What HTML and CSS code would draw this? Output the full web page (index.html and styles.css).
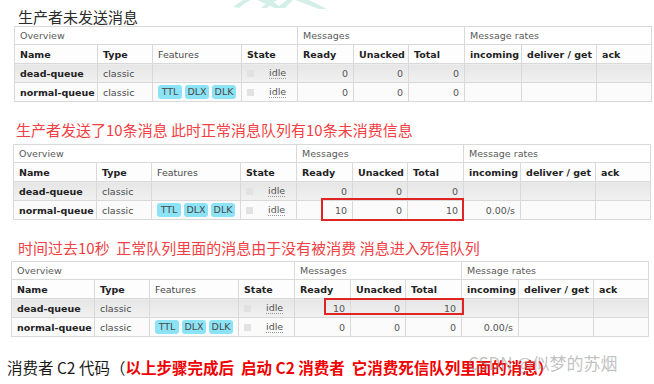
FILE: index.html
```html
<!DOCTYPE html>
<html lang="zh">
<head>
<meta charset="utf-8">
<title>死信队列</title>
<link rel="stylesheet" href="styles.css">
</head>
<body>
<div class="page">
  <svg class="mark" width="120" height="12" viewBox="0 0 120 12">
    <path d="M10 7 Q18 0 26 -2 L32 -2 Q22 2 16 8 Z" fill="#d3efe8"/>
    <path d="M34 0 L48 0 L56 6 L64 0 L70 0 L62 8 L52 8 Z" fill="#d3efe8"/>
    <path d="M48 0 Q42 4 38 8 L44 8 Q48 4 54 0 Z" fill="#d3efe8"/>
    <path d="M72 0 L86 0 L104 9 L96 9 Z" fill="#d3efe8"/>
  </svg>

  <h2 class="title t1">生产者未发送消息</h2>
  <table class="mq mq1">
    <colgroup>
      <col class="c-name"><col class="c-type"><col class="c-feat"><col class="c-state">
      <col class="c-ready"><col class="c-unack"><col class="c-total">
      <col class="c-in"><col class="c-del"><col class="c-ack">
    </colgroup>
    <tr class="group"><td colspan="4">Overview</td><td colspan="3">Messages</td><td colspan="3">Message rates</td></tr>
    <tr class="head"><th>Name</th><th>Type</th><th class="light">Features</th><th>State</th><th>Ready</th><th>Unacked</th><th>Total</th><th>incoming</th><th>deliver / get</th><th>ack</th></tr>
    <tr class="alt"><td class="qn">dead-queue</td><td>classic</td><td></td><td><span class="st"><i class="box"></i><span class="idle">idle</span></span></td><td class="num">0</td><td class="num">0</td><td class="num">0</td><td></td><td></td><td></td></tr>
    <tr class="row"><td class="qn">normal-queue</td><td>classic</td><td><span class="tags"><span class="tag">TTL</span><span class="tag">DLX</span><span class="tag">DLK</span></span></td><td><span class="st"><i class="box"></i><span class="idle">idle</span></span></td><td class="num">0</td><td class="num">0</td><td class="num">0</td><td></td><td></td><td></td></tr>
  </table>

  <h2 class="title red t2">生产者发送了10条消息 此时正常消息队列有10条未消费信息</h2>
  <div class="wrap w2">
    <table class="mq mq2">
      <colgroup>
        <col class="c-name"><col class="c-type"><col class="c-feat"><col class="c-state">
        <col class="c-ready"><col class="c-unack"><col class="c-total">
        <col class="c-in"><col class="c-del"><col class="c-ack">
      </colgroup>
      <tr class="group"><td colspan="4">Overview</td><td colspan="3">Messages</td><td colspan="3">Message rates</td></tr>
      <tr class="head"><th>Name</th><th>Type</th><th class="light">Features</th><th>State</th><th>Ready</th><th>Unacked</th><th>Total</th><th>incoming</th><th>deliver / get</th><th>ack</th></tr>
      <tr class="alt"><td class="qn">dead-queue</td><td>classic</td><td></td><td><span class="st"><i class="box"></i><span class="idle">idle</span></span></td><td class="num">0</td><td class="num">0</td><td class="num">0</td><td></td><td></td><td></td></tr>
      <tr class="row"><td class="qn">normal-queue</td><td>classic</td><td><span class="tags"><span class="tag">TTL</span><span class="tag">DLX</span><span class="tag">DLK</span></span></td><td><span class="st"><i class="box"></i><span class="idle">idle</span></span></td><td class="num">10</td><td class="num">0</td><td class="num">10</td><td class="num">0.00/s</td><td></td><td></td></tr>
    </table>
    <div class="hl hl2"></div>
  </div>

  <h2 class="title red t3">时间过去10秒&nbsp; 正常队列里面的消息由于没有被消费 消息进入死信队列</h2>
  <div class="wrap w3">
    <table class="mq mq3">
      <colgroup>
        <col class="c-name"><col class="c-type"><col class="c-feat"><col class="c-state">
        <col class="c-ready"><col class="c-unack"><col class="c-total">
        <col class="c-in"><col class="c-del"><col class="c-ack">
      </colgroup>
      <tr class="group"><td colspan="4">Overview</td><td colspan="3">Messages</td><td colspan="3">Message rates</td></tr>
      <tr class="head"><th>Name</th><th>Type</th><th class="light">Features</th><th>State</th><th>Ready</th><th>Unacked</th><th>Total</th><th>incoming</th><th>deliver / get</th><th>ack</th></tr>
      <tr class="alt"><td class="qn">dead-queue</td><td>classic</td><td></td><td><span class="st"><i class="box"></i><span class="idle">idle</span></span></td><td class="num">10</td><td class="num">0</td><td class="num">10</td><td></td><td></td><td></td></tr>
      <tr class="row"><td class="qn">normal-queue</td><td>classic</td><td><span class="tags"><span class="tag">TTL</span><span class="tag">DLX</span><span class="tag">DLK</span></span></td><td><span class="st"><i class="box"></i><span class="idle">idle</span></span></td><td class="num">0</td><td class="num">0</td><td class="num">0</td><td class="num">0.00/s</td><td></td><td></td></tr>
    </table>
    <div class="hl hl3"></div>
  </div>

  <p class="foot">消费者 C2 代码（<b>以上步骤完成后&nbsp; 启动 C2 消费者&nbsp; 它消费死信队列里面的消息）</b></p>
  <div class="wm">CSDN @似梦的苏烟</div>
</div>
</body>
</html>
```

FILE: styles.css
```css
html, body {
  margin: 0;
  padding: 0;
  background: #ffffff;
}

.page {
  position: relative;
  width: 654px;
  height: 384px;
  overflow: hidden;
  font-family: "Noto Sans CJK SC", "Noto Sans", sans-serif;
}

.mark {
  position: absolute;
  left: 223px;
  top: 0;
}

.title {
  margin: 0;
  font-weight: normal;
  font-size: 15px;
  line-height: 19px;
  height: 19px;
  white-space: nowrap;
  color: #2b2b2b;
}

.t1 { padding: 7px 0 0 18px; }
.t2 { margin: 18px 0 5px 0; padding-left: 16px; }
.t3 { margin: 18px 0 4px 0; padding-left: 18px; }

.red { color: #f23f45; }

.wrap { position: relative; }

.mq {
  border-collapse: collapse;
  table-layout: fixed;
  width: 637px;
  font-family: "DejaVu Sans", Verdana, sans-serif;
  font-size: 9.5px;
  color: #4a4a4a;
}

.mq1 { margin-left: 14px; }
.w2 .mq { margin-left: 13px; }
.w3 .mq { margin-left: 11px; }

.c-name { width: 83px; }
.c-type { width: 55px; }
.c-feat { width: 89px; }
.c-state { width: 56px; }
.c-ready { width: 56px; }
.c-unack { width: 55px; }
.c-total { width: 56px; }
.c-in { width: 57px; }
.c-del { width: 75px; }
.c-ack { width: 55px; }

.mq td, .mq th {
  border: 1px solid #d9d9d9;
  padding: 0 5px;
  height: 18px;
  text-align: left;
  white-space: nowrap;
  overflow: hidden;
  vertical-align: middle;
}

.group td {
  height: 17px;
  color: #5a5a5a;
  background: #ffffff;
}

.head th {
  font-weight: bold;
  color: #222;
  background: #fdfdfd;
}

.head th.light {
  font-weight: normal;
  color: #4a4a4a;
}

.alt td {
  background: linear-gradient(#e6e6e6, #f1f1f1);
}

.row td {
  background: #fbfbfb;
}

.mq td.qn {
  font-weight: bold;
  color: #222;
}

.mq td.num {
  text-align: right;
  color: #555;
}

.tags {
  display: flex;
  gap: 3px;
}

.tag {
  display: inline-block;
  width: 24px;
  height: 14px;
  line-height: 14px;
  text-align: center;
  border-radius: 3px;
  background: #8ce3f5;
  color: #4a4a4a;
  font-size: 9.5px;
}

.st {
  display: flex;
  align-items: center;
}

.box {
  display: inline-block;
  width: 7px;
  height: 7px;
  background: #e2e2e2;
  margin-right: 15px;
}

.idle {
  color: #555;
  border-bottom: 1px dotted #999;
  line-height: 11px;
}

.hl {
  position: absolute;
  border: 2px solid #e02424;
  box-sizing: border-box;
}

.hl2 { left: 321px; top: 54px; width: 143px; height: 23px; }
.hl3 { left: 324px; top: 37px; width: 140px; height: 17px; }

.foot {
  margin: 20px 0 0 7px;
  font-size: 15.5px;
  line-height: 21px;
  color: #1a1a1a;
  white-space: nowrap;
}

.foot b {
  color: #f00000;
  font-weight: bold;
}

.wm {
  position: absolute;
  left: 468px;
  top: 352px;
  font-family: "Noto Sans CJK SC", "Noto Sans", sans-serif;
  font-size: 17px;
  line-height: 22px;
  color: rgba(140, 140, 140, 0.55);
  white-space: nowrap;
}
```
